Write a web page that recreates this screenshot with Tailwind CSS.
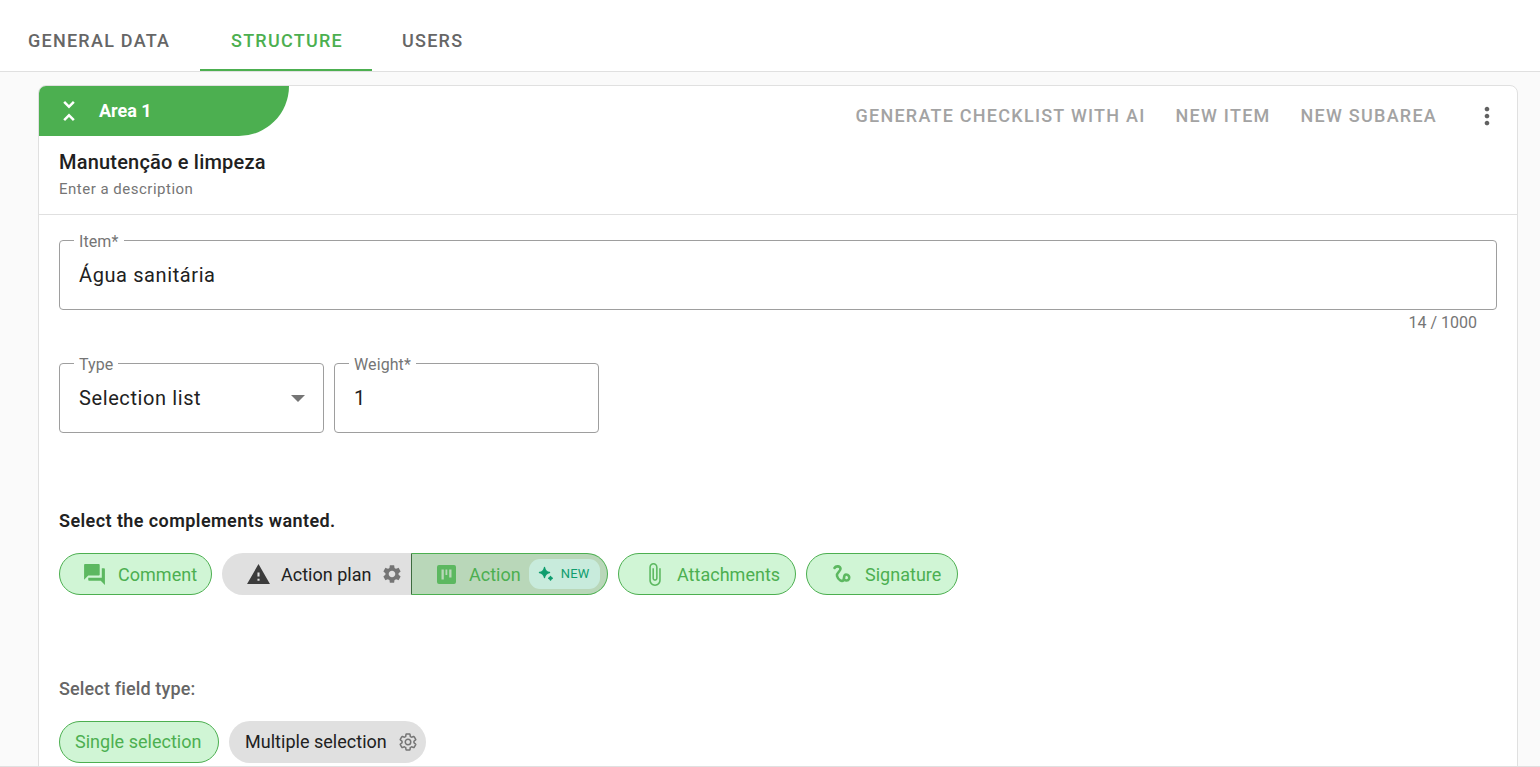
<!DOCTYPE html>
<html>
<head>
<meta charset="utf-8">
<script src="https://cdn.jsdelivr.net/npm/@tailwindcss/browser@4"></script>
</head>
<body class="m-0 bg-[#fafafa]">
<div class="h-[767px] overflow-hidden flex flex-col border-b border-[#e0e0e0] font-['Roboto',sans-serif]">
  <nav class="h-[72px] shrink-0 flex items-start bg-white border-b border-[#e0e0e0] text-[18px] font-medium tracking-[1.25px] uppercase text-[#666]">
    <div class="w-[200px] h-[71px] pl-[28px] pt-[30px] leading-[21px]">General Data</div>
    <div class="w-[172px] h-[71px] pl-[31px] pt-[30px] leading-[21px] text-[#4caf50] border-b-2 border-[#4caf50]">Structure</div>
    <div class="pl-[30px] pt-[30px] leading-[21px]">Users</div>
  </nav>
  <main class="px-[38px] pt-[13px] flex-1 min-h-0">
    <section class="w-[1480px] h-[800px] bg-white border border-[#e0e0e0] rounded-[8px] overflow-hidden">
      <header class="h-[129px] border-b border-[#e0e0e0]">
        <div class="flex items-start justify-between">
          <div class="w-[250px] h-[50px] bg-[#4caf50] rounded-br-[50px] flex items-center pl-[15px] text-white">
            <svg viewBox="0 0 24 24" class="w-[30px] h-[30px] fill-white"><path d="M7.41 18.59 8.83 20 12 16.83 15.17 20l1.41-1.41L12 14l-4.59 4.59zm9.18-13.18L15.17 4 12 7.17 8.83 4 7.41 5.41 12 10l4.59-4.59z"/></svg>
            <span class="ml-[15px] mb-[2px] text-[18px] font-bold leading-[21px]">Area 1</span>
          </div>
          <div class="flex items-center h-[60px] text-[#a3a3a3] text-[18px] font-medium tracking-[1.25px] uppercase pr-[16px]">
            <span class="mb-[2px]">Generate checklist with AI</span>
            <span class="ml-[30px] mb-[2px]">New item</span>
            <span class="ml-[30px] mb-[2px]">New subarea</span>
            <svg viewBox="0 0 24 24" class="w-[28px] h-[28px] ml-[36px] fill-[#616161]"><path d="M12 8c1.1 0 2-.9 2-2s-.9-2-2-2-2 .9-2 2 .9 2 2 2zm0 2c-1.1 0-2 .9-2 2s.9 2 2 2 2-.9 2-2-.9-2-2-2zm0 6c-1.1 0-2 .9-2 2s.9 2 2 2 2-.9 2-2-.9-2-2-2z"/></svg>
          </div>
        </div>
        <div class="pl-[20px] mt-[5px]">
          <h2 class="text-[20px] font-medium leading-[22px] tracking-[.2px] text-[#212121]">Manutenção e limpeza</h2>
          <p class="text-[15px] leading-[16px] mt-[8px] tracking-[.5px] text-[#757575]">Enter a description</p>
        </div>
      </header>
      <div class="px-[20px] pt-[25px]">
        <div class="relative h-[70px] border border-[#9e9e9e] rounded-[4px] flex items-center pl-[19px] text-[20px] tracking-[.6px] text-[#212121]">
          <span class="absolute -top-[7px] left-[14px] px-[5px] bg-white text-[16px] leading-[16px] tracking-[.1px] text-[#757575]">Item*</span>
          Água sanitária
        </div>
        <div class="h-[23px] pr-[20px] pt-[5px] text-right text-[16px] leading-[16px] text-[#757575]">14 / 1000</div>
        <div class="flex gap-[10px] mt-[30px]">
          <div class="relative w-[265px] h-[70px] border border-[#9e9e9e] rounded-[4px] flex items-center justify-between pl-[19px] pr-[18px] text-[20px] tracking-[.6px] text-[#212121]">
            <span class="absolute -top-[7px] left-[14px] px-[5px] bg-white text-[16px] leading-[16px] tracking-[.1px] text-[#757575]">Type</span>
            Selection list
            <span class="w-0 h-0 border-x-[7px] border-x-transparent border-t-[7px] border-t-[#757575]"></span>
          </div>
          <div class="relative w-[265px] h-[70px] border border-[#9e9e9e] rounded-[4px] flex items-center pl-[19px] text-[20px] text-[#212121]">
            <span class="absolute -top-[7px] left-[14px] px-[5px] bg-white text-[16px] leading-[16px] tracking-[.1px] text-[#757575]">Weight*</span>
            1
          </div>
        </div>
        <h3 class="mt-[78px] text-[18px] font-semibold leading-[20px] tracking-[.42px] text-[#212121]">Select the complements wanted.</h3>
        <div class="flex mt-[22px] h-[42px] text-[18px] leading-[42px] tracking-[.02px]">
          <div class="w-[153px] flex items-center border border-[#4caf50] rounded-full bg-[#d0f5d5] text-[#4caf50] pl-[22px]">
            <svg viewBox="0 0 24 24" class="w-[25px] h-[25px] fill-[#5cb860]"><path d="M21 6h-2v9H6v2c0 .55.45 1 1 1h11l4 4V7c0-.55-.45-1-1-1zm-4 6V3c0-.55-.45-1-1-1H3c-.55 0-1 .45-1 1v14l4-4h10c.55 0 1-.45 1-1z"/></svg>
            <span class="ml-[11px] pt-[2px]">Comment</span>
          </div>
          <div class="w-[189px] ml-[10px] flex items-center rounded-l-full bg-[#e0e0e0] text-[#212121] pl-[24px]">
            <svg viewBox="0 0 24 24" class="w-[25px] h-[25px] fill-[#3c3c3c]"><path d="M1 21h22L12 2 1 21zm12-3h-2v-2h2v2zm0-4h-2v-4h2v4z"/></svg>
            <span class="ml-[10px] pt-[2px]">Action plan</span>
            <svg viewBox="0 0 24 24" class="w-[22px] h-[22px] ml-[9px] fill-[#757575]"><path d="M19.14 12.94c.04-.3.06-.61.06-.94 0-.32-.02-.64-.07-.94l2.03-1.58c.18-.14.23-.41.12-.61l-1.92-3.32c-.12-.22-.37-.29-.59-.22l-2.39.96c-.5-.38-1.03-.7-1.62-.94l-.36-2.54c-.04-.24-.24-.41-.48-.41h-3.84c-.24 0-.43.17-.47.41l-.36 2.54c-.59.24-1.13.57-1.62.94l-2.39-.96c-.22-.08-.47 0-.59.22L2.74 8.87c-.12.21-.08.47.12.61l2.03 1.58c-.05.3-.09.63-.09.94s.02.64.07.94l-2.03 1.58c-.18.14-.23.41-.12.61l1.92 3.32c.12.22.37.29.59.22l2.39-.96c.5.38 1.03.7 1.62.94l.36 2.54c.05.24.24.41.48.41h3.84c.24 0 .44-.17.47-.41l.36-2.54c.59-.24 1.13-.56 1.62-.94l2.39.96c.22.08.47 0 .59-.22l1.92-3.32c.12-.22.07-.47-.12-.61l-2.01-1.58zM12 15.6c-1.98 0-3.6-1.62-3.6-3.6s1.62-3.6 3.6-3.6 3.6 1.62 3.6 3.6-1.62 3.6-3.6 3.6z"/></svg>
          </div>
          <div class="w-[197px] flex items-center border border-[#4caf50] border-l-[#3d6b3f] rounded-r-full bg-[#b9d7b9] text-[#4caf50] pl-[25px]">
            <svg viewBox="0 0 19 19" class="w-[19px] h-[19px] fill-[#5cb860]"><path fill-rule="evenodd" d="M2 0h15a2 2 0 0 1 2 2v15a2 2 0 0 1-2 2H2a2 2 0 0 1-2-2V2a2 2 0 0 1 2-2zm2.500 4.500v10h2.300v-10H4.500zm4 0v5.500h1.800V4.500H8.500zm3.700 0v8h2.300v-8h-2.300z"/></svg>
            <span class="ml-[13px] pt-[2px]">Action</span>
            <div class="ml-[8px] w-[71px] h-[30px] rounded-[11px] bg-[#c8ebdc] text-[#0f9d6e] flex items-center pl-[9px] text-[13px] tracking-[.2px]">
              <svg viewBox="0 0 16 16" class="w-[16px] h-[16px] fill-[#0f9d6e]"><path d="M6.500 1.500C7 4.500 8.500 6 11.500 6.500 8.500 7 7 8.500 6.500 11.500 6 8.500 4.500 7 1.500 6.500 4.500 6 6 4.500 6.500 1.500zM12.500 10.500c.2 1 .8 1.600 1.800 1.800-1 .2-1.600.8-1.800 1.800-.2-1-.8-1.600-1.800-1.800 1-.2 1.600-.8 1.800-1.800z" stroke="#0f9d6e" stroke-width="1.400" stroke-linejoin="round"/></svg>
              <span class="ml-[7px] leading-[16px]">NEW</span>
            </div>
          </div>
          <div class="w-[178px] ml-[10px] flex items-center border border-[#4caf50] rounded-full bg-[#d0f5d5] text-[#4caf50] pl-[23px]">
            <svg viewBox="0 0 24 24" class="w-[25px] h-[25px] fill-[#5cb860]"><path d="M16.500 6v11.500c0 2.210-1.790 4-4 4s-4-1.790-4-4V5c0-1.380 1.120-2.500 2.500-2.500s2.500 1.120 2.500 2.500v10.500c0 .55-.45 1-1 1s-1-.45-1-1V6H10v9.500c0 1.380 1.120 2.500 2.500 2.500s2.500-1.120 2.500-2.500V5c0-2.210-1.790-4-4-4S7 2.790 7 5v12.500c0 3.040 2.460 5.500 5.500 5.500s5.500-2.460 5.500-5.500V6h-1.500z"/></svg>
            <span class="ml-[10px] pt-[2px]">Attachments</span>
          </div>
          <div class="w-[152px] ml-[10px] flex items-center border border-[#4caf50] rounded-full bg-[#d0f5d5] text-[#4caf50] pl-[23px]">
            <svg viewBox="0 0 24 24" class="w-6 h-6 fill-none stroke-[#5cb860] stroke-[2.600]" stroke-linecap="round" stroke-linejoin="round"><path d="M4.500 6C6 3.500 10 4 10.500 6.500C11 9.500 6 10.500 7 14C8 17.500 12 20.500 13.500 18C14.500 16 13.500 12.500 16 12.500C18.500 12.500 20 15 19 17C18 19 15.500 19 14 17.500"/></svg>
            <span class="ml-[11px] pt-[2px]">Signature</span>
          </div>
        </div>
        <div class="mt-[84px] text-[18px] font-medium leading-[20px] tracking-[.15px] text-[#666]">Select field type:</div>
        <div class="flex gap-[10px] mt-[22px] h-[42px] text-[18px] leading-[42px] tracking-[.02px]">
          <div class="w-[160px] border border-[#4caf50] rounded-full bg-[#d0f5d5] text-[#4caf50] flex items-center pl-[15px]">Single selection</div>
          <div class="w-[197px] rounded-full bg-[#e0e0e0] text-[#212121] flex items-center pl-[16px]">
            Multiple selection
            <svg viewBox="0 0 24 24" class="w-[20px] h-[20px] ml-[11px] fill-none stroke-[#757575] stroke-[1.800]"><path d="M19.140 12.940c.04-.3.06-.61.06-.94 0-.32-.02-.64-.07-.94l2.030-1.580c.18-.14.23-.41.12-.61l-1.920-3.320c-.12-.22-.37-.29-.59-.22l-2.390.96c-.5-.38-1.030-.7-1.620-.94l-.36-2.540c-.04-.24-.24-.41-.48-.41h-3.840c-.24 0-.43.17-.47.41l-.36 2.540c-.59.24-1.130.57-1.620.94l-2.390-.96c-.22-.08-.47 0-.59.22L2.740 8.870c-.12.21-.08.47.12.61l2.030 1.580c-.05.3-.09.63-.09.94s.02.64.07.94l-2.030 1.580c-.18.14-.23.41-.12.61l1.920 3.320c.12.22.37.29.59.22l2.390-.96c.5.38 1.030.7 1.620.94l.36 2.540c.05.24.24.41.48.41h3.840c.24 0 .44-.17.47-.41l.36-2.540c.59-.24 1.130-.56 1.620-.94l2.390.96c.22.08.47 0 .59-.22l1.920-3.320c.12-.22.07-.47-.12-.61l-2.010-1.580z"/><circle cx="12" cy="12" r="3.300"/></svg>
          </div>
        </div>
      </div>
    </section>
  </main>
</div>
</body>
</html>
